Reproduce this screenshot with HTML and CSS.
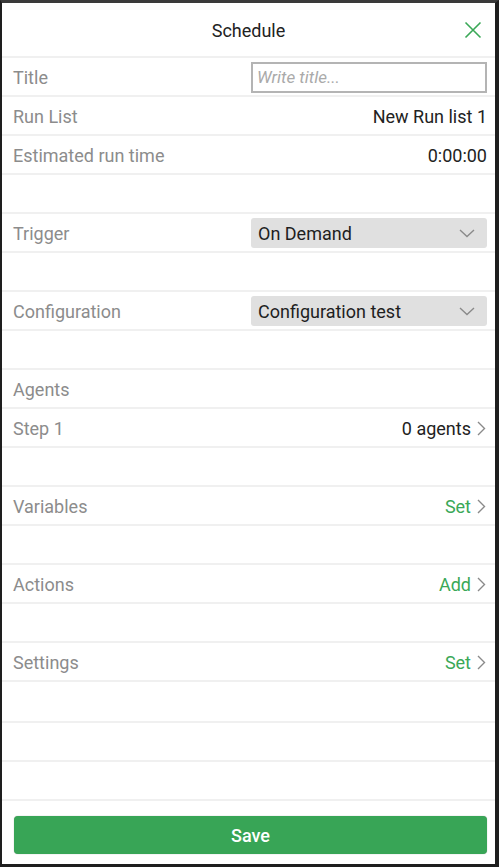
FILE: index.html
```html
<!DOCTYPE html>
<html>
<head>
<meta charset="utf-8">
<link rel="stylesheet" href="styles.css">
</head>
<body>
<div class="frame">
  <div class="header">
    <span class="heading">Schedule</span>
    <svg class="close" width="18" height="18" viewBox="0 0 18 18"><path d="M1.5 1.5L16.5 16.5M16.5 1.5L1.5 16.5" stroke="#3aa857" stroke-width="1.6" fill="none"/></svg>
  </div>
  <div class="row"><span class="label">Title</span><div class="input">Write title...</div></div>
  <div class="row"><span class="label">Run List</span><span class="value">New Run list 1</span></div>
  <div class="row"><span class="label">Estimated run time</span><span class="value">0:00:00</span></div>
  <div class="row"></div>
  <div class="row"><span class="label">Trigger</span><div class="select"><span>On Demand</span><svg width="16" height="9" viewBox="0 0 16 9"><path d="M1 1L8 7.5L15 1" stroke="#8a8a8a" stroke-width="1.4" fill="none"/></svg></div></div>
  <div class="row"></div>
  <div class="row"><span class="label">Configuration</span><div class="select"><span>Configuration test</span><svg width="16" height="9" viewBox="0 0 16 9"><path d="M1 1L8 7.5L15 1" stroke="#8a8a8a" stroke-width="1.4" fill="none"/></svg></div></div>
  <div class="row"></div>
  <div class="row"><span class="label">Agents</span></div>
  <div class="row"><span class="label">Step 1</span><span class="value">0 agents<svg class="chev" width="9" height="15" viewBox="0 0 9 15"><path d="M1 1L7.5 7.5L1 14" stroke="#8a8a8a" stroke-width="1.4" fill="none"/></svg></span></div>
  <div class="row"></div>
  <div class="row"><span class="label">Variables</span><span class="value green">Set<svg class="chev" width="9" height="15" viewBox="0 0 9 15"><path d="M1 1L7.5 7.5L1 14" stroke="#8a8a8a" stroke-width="1.4" fill="none"/></svg></span></div>
  <div class="row"></div>
  <div class="row"><span class="label">Actions</span><span class="value green">Add<svg class="chev" width="9" height="15" viewBox="0 0 9 15"><path d="M1 1L7.5 7.5L1 14" stroke="#8a8a8a" stroke-width="1.4" fill="none"/></svg></span></div>
  <div class="row"></div>
  <div class="row"><span class="label">Settings</span><span class="value green">Set<svg class="chev" width="9" height="15" viewBox="0 0 9 15"><path d="M1 1L7.5 7.5L1 14" stroke="#8a8a8a" stroke-width="1.4" fill="none"/></svg></span></div>
  <div class="row tall"></div>
  <div class="row"></div>
  <div class="row"></div>
  <div class="footer"><button class="save">Save</button></div>
</div>
</body>
</html>
```
FILE: styles.css
```css
html, body {
  margin: 0;
  padding: 0;
  background: #1e1e1e;
}
body {
  font-family: Roboto, "Liberation Sans", sans-serif;
  font-size: 18px;
}
.frame {
  width: 493px;
  height: 861px;
  border-top: 3px solid #3a3a3a;
  border-left: 2px solid #1e1e1e;
  border-right: 4px solid #1e1e1e;
  border-bottom: 3px solid #1e1e1e;
  background: #fff;
  display: flex;
  flex-direction: column;
}
.header {
  height: 53px;
  flex: none;
  border-bottom: 2px solid #f0f0f0;
  display: flex;
  align-items: center;
  justify-content: center;
  position: relative;
}
.heading {
  color: #222;
  font-size: 18px;
  margin-top: 1px;
}
.close {
  position: absolute;
  right: 13px;
  top: 18px;
}
.row {
  height: 37px;
  border-bottom: 2px solid #f0f0f0;
  display: flex;
  align-items: center;
  justify-content: space-between;
  padding: 0 8px 0 11px;
  flex: none;
}
.row.tall {
  height: 39px;
}
.label {
  color: #8c8c8c;
  margin-top: 2px;
}
.value {
  color: #222;
  display: flex;
  align-items: center;
  margin-top: 2px;
}
.value.green {
  color: #3aa857;
}
.chev {
  margin-left: 6px;
  margin-right: 1px;
}
.input {
  width: 228px;
  height: 27px;
  border: 2px solid #b4b4b4;
  box-sizing: content-box;
  color: #aaa;
  font-style: italic;
  font-size: 17px;
  display: flex;
  align-items: center;
  padding-left: 4px;
  margin-right: 0;
  margin-top: 1px;
}
.select {
  width: 217px;
  height: 30px;
  background: #e0e0e0;
  border-radius: 3px;
  display: flex;
  align-items: center;
  justify-content: space-between;
  padding: 0 12px 0 7px;
  color: #1e1e1e;
  margin-top: 1px;
}
.footer {
  flex: 1;
  padding: 15px 8px 0 12px;
}
.save {
  width: 100%;
  height: 38px;
  background: #38a556;
  border: none;
  border-radius: 4px;
  color: #fff;
  font-family: Roboto, "Liberation Sans", sans-serif;
  font-size: 18px;
  font-weight: 500;
  box-shadow: 0 0 1px rgba(0,0,0,0.4);
}
```
